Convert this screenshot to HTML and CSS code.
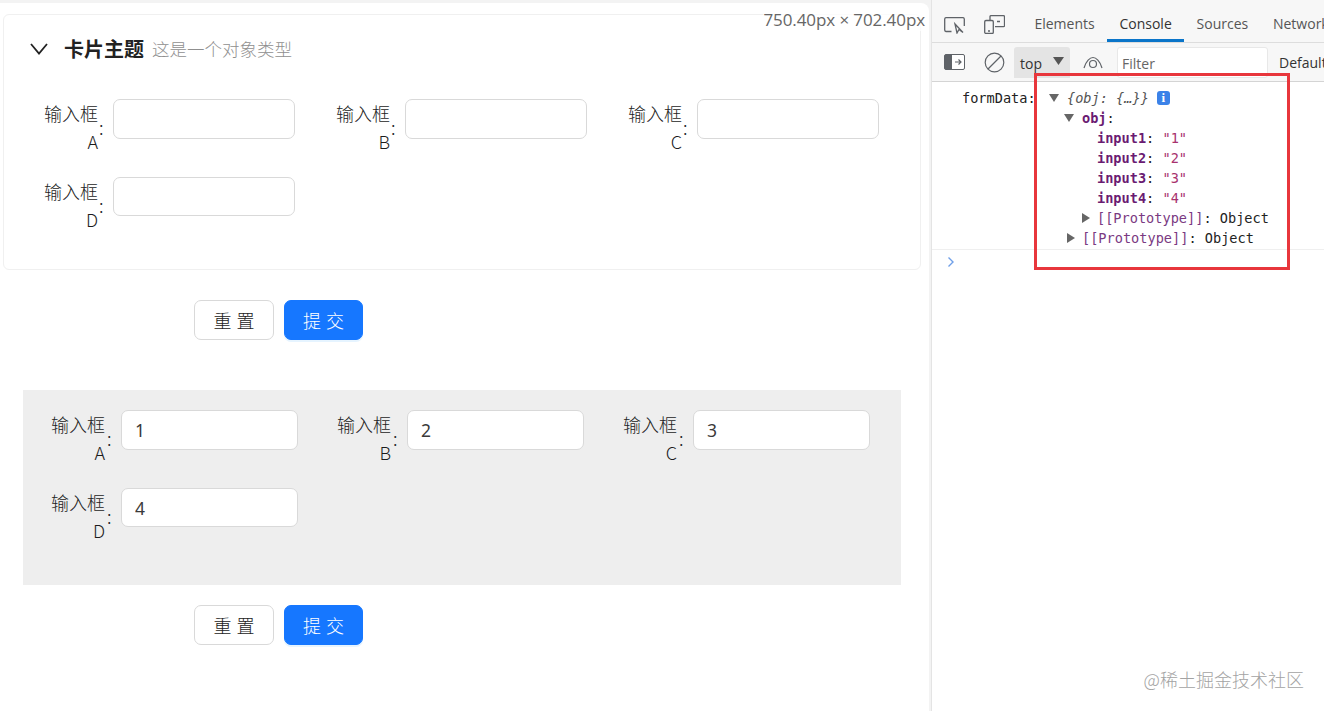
FILE: index.html
```html
<!DOCTYPE html>
<html lang="zh">
<head>
<meta charset="utf-8">
<title>表单</title>
<link rel="stylesheet" href="styles.css">
</head>
<body>
<main class="page">
  <section class="view">
    <div class="size-tip">750.40px × 702.40px</div>
    <div class="card">
      <header class="card-head">
        <svg class="chevron" width="18" height="12" viewBox="0 0 18 12"><path d="M1 1l8 9.500 8-9.500" fill="none" stroke="#222" stroke-width="1.800"/></svg>
        <strong class="card-title">卡片主题</strong>
        <span class="card-desc">这是一个对象类型</span>
      </header>
      <div class="fields">
        <div class="field"><label class="label"><span class="label-text">输入框A</span><span class="colon">:</span></label><input class="input" type="text"></div>
        <div class="field"><label class="label"><span class="label-text">输入框B</span><span class="colon">:</span></label><input class="input" type="text"></div>
        <div class="field"><label class="label"><span class="label-text">输入框C</span><span class="colon">:</span></label><input class="input" type="text"></div>
        <div class="field"><label class="label"><span class="label-text">输入框D</span><span class="colon">:</span></label><input class="input" type="text"></div>
      </div>
    </div>
    <div class="actions actions-first">
      <button class="btn">重 置</button>
      <button class="btn btn-primary">提 交</button>
    </div>
    <div class="gray-form">
      <div class="fields fields-gray">
        <div class="field"><label class="label"><span class="label-text">输入框A</span><span class="colon">:</span></label><input class="input" type="text" value="1"></div>
        <div class="field"><label class="label"><span class="label-text">输入框B</span><span class="colon">:</span></label><input class="input" type="text" value="2"></div>
        <div class="field"><label class="label"><span class="label-text">输入框C</span><span class="colon">:</span></label><input class="input" type="text" value="3"></div>
        <div class="field"><label class="label"><span class="label-text">输入框D</span><span class="colon">:</span></label><input class="input" type="text" value="4"></div>
      </div>
    </div>
    <div class="actions actions-second">
      <button class="btn">重 置</button>
      <button class="btn btn-primary">提 交</button>
    </div>
  </section>

  <section class="devtools">
    <nav class="tabs">
      <svg class="tool-icon first-icon" width="21" height="17" viewBox="0 0 21 17"><path d="M7.500 14.500H2A1.500 1.500 0 0 1 .7 13V2A1.500 1.500 0 0 1 2 .7h17A1.500 1.500 0 0 1 20.300 2v7" fill="none" stroke="#5f6368" stroke-width="1.300"/><path d="M11 7l2 9 2-3.500 4 3z" fill="none" stroke="#5f6368" stroke-width="1.300"/></svg>
      <svg class="tool-icon second-icon" width="21" height="19" viewBox="0 0 21 19"><path d="M6 5V1.500A1 1 0 0 1 7 .7h12.500a1 1 0 0 1 1 1v9a1 1 0 0 1-1 1H11" fill="none" stroke="#5f6368" stroke-width="1.300"/><rect x=".7" y="5.500" width="8.600" height="13" rx="1.300" fill="none" stroke="#5f6368" stroke-width="1.300"/><path d="M4 16h2M13 6.500h3" stroke="#5f6368" stroke-width="1.300"/></svg>
      <span class="tab tab-elements">Elements</span>
      <span class="tab tab-active">Console</span>
      <span class="tab">Sources</span>
      <span class="tab">Network</span>
    </nav>
    <div class="filterbar">
      <svg class="tool-icon sidebar-icon" width="21" height="16" viewBox="0 0 21 16"><rect x="0.500" y="0.500" width="20" height="15" rx="1.500" fill="#fff" stroke="#5f6368"/><path d="M2 0.500h6v15H2a1.500 1.500 0 0 1-1.500-1.500V2A1.500 1.500 0 0 1 2 .5z" fill="#5f6368"/><path d="M11 8h6M14.500 5.500L17 8l-2.500 2.500" fill="none" stroke="#5f6368" stroke-width="1.200"/></svg>
      <svg class="tool-icon clear-icon" width="21" height="21" viewBox="0 0 21 21"><circle cx="10.500" cy="10.500" r="9.300" fill="none" stroke="#5f6368" stroke-width="1.200"/><path d="M4 17L17 4" stroke="#5f6368" stroke-width="1.200"/></svg>
      <div class="context"><span>top</span><svg width="11" height="8" viewBox="0 0 11 8"><path d="M0 0h11L5.500 8z" fill="#555"/></svg></div>
      <svg class="tool-icon eye-icon" width="20" height="13" viewBox="0 0 20 13"><path d="M1 12C3 5 7 1.500 10 1.500S17 5 19 12" fill="none" stroke="#5f6368" stroke-width="1.200"/><circle cx="10" cy="8" r="3.500" fill="none" stroke="#5f6368" stroke-width="1.200"/></svg>
      <div class="filter">Filter</div>
      <span class="levels">Default</span>
    </div>
    <div class="console">
      <div class="log">
        <span class="log-prefix">formData:</span>
        <div class="tree">
          <div class="row"><i class="tri tri-down"></i><em class="summary">{obj: {…}}</em><span class="info">i</span></div>
          <div class="row indent-1"><i class="tri tri-down"></i><b class="key">obj</b>:</div>
          <div class="row indent-2"><b class="key">input1</b>:&nbsp;<span class="str">"1"</span></div>
          <div class="row indent-2"><b class="key">input2</b>:&nbsp;<span class="str">"2"</span></div>
          <div class="row indent-2"><b class="key">input3</b>:&nbsp;<span class="str">"3"</span></div>
          <div class="row indent-2"><b class="key">input4</b>:&nbsp;<span class="str">"4"</span></div>
          <div class="row indent-2"><i class="tri tri-right"></i><span class="proto">[[Prototype]]</span>:&nbsp;Object</div>
          <div class="row indent-1"><i class="tri tri-right"></i><span class="proto">[[Prototype]]</span>:&nbsp;Object</div>
        </div>
      </div>
      <div class="prompt"><svg width="8" height="12" viewBox="0 0 8 12"><path d="M1.500 1.500L6 6l-4.500 4.500" fill="none" stroke="#6f9fe8" stroke-width="1.400"/></svg></div>
    </div>
    <div class="red-box"></div>
    <div class="watermark">@稀土掘金技术社区</div>
  </section>
</main>
</body>
</html>
```

FILE: styles.css
```css
* { box-sizing: border-box; }
html, body { margin: 0; height: 100%; overflow: hidden; }
body {
  background: #f3f3f3;
  font-family: "Noto Sans CJK SC", "Noto Sans", sans-serif;
  color: #222;
}
.page { display: flex; height: 711px; padding-top: 3px; }

/* left viewport */
.view {
  position: relative;
  width: 929px;
  flex: none;
  background: #fff;
  border-top-right-radius: 8px;
  padding: 11px 8px 0 3px;
}
.size-tip {
  position: absolute;
  top: 6px;
  right: 4px;
  font: 17px/22px "Open Sans", sans-serif;
  color: #666;
  background: rgba(255, 255, 255, .75);
  letter-spacing: -.09px;
}
.card {
  height: 256px;
  border: 1px solid #f0f0f0;
  border-radius: 6px;
}
.card-head {
  display: flex;
  align-items: center;
  height: 36px;
  margin-top: 15px;
  padding-left: 26px;
}
.chevron { flex: none; margin: 1px 16px 0 0; }
.card-title { font-size: 20px; font-weight: 700; color: #222; }
.card-desc { font-size: 17.500px; font-weight: 300; color: #8f8f8f; margin-left: 8px; }

.fields {
  display: grid;
  grid-template-columns: repeat(3, 292px);
  grid-auto-rows: 40px;
  row-gap: 38px;
  margin: 33px 0 0 40px;
}
.field { display: flex; align-items: flex-start; }
.field:nth-child(4) .input { height: 39px; }
.label { display: flex; align-items: center; width: 69px; flex: none; height: 56px; }
.label-text {
  width: 54px;
  text-align: right;
  font-size: 18px;
  font-weight: 300;
  line-height: 28px;
  color: #1c1c1c;
}
.colon { font-size: 18px; line-height: 28px; margin-left: 1px; font-weight: 300; }
.input {
  width: 182px;
  height: 40px;
  padding: 0 14px;
  border: 1px solid #d9d9d9;
  border-radius: 7px;
  background: #fff;
  font: 400 17.500px "Noto Sans", sans-serif;
  color: #3a3a3a;
  outline: none;
}
.actions { display: flex; gap: 10px; padding-left: 191px; }
.actions-first { margin-top: 30px; }
.actions-second { margin-top: 20px; }
.btn {
  width: 80px;
  height: 40px;
  border: 1px solid #d9d9d9;
  border-radius: 7px;
  background: #fff;
  color: #222;
  font: 300 18px "Noto Sans CJK SC", sans-serif;
  word-spacing: 1px;
  padding: 0;
}
.btn-primary {
  width: 79px;
  background: #1677ff;
  border-color: #1677ff;
  color: #fff;
  box-shadow: 0 2px 0 rgba(5, 145, 255, .1);
}
.gray-form {
  height: 195px;
  margin: 50px 20px 0 20px;
  padding-top: 20px;
  background: #eeeeee;
}
.fields-gray {
  grid-template-columns: repeat(3, 286px);
  margin: 0 0 0 29px;
}
.fields-gray .input { width: 177px; padding: 0 13px; }
.fields-gray .label-text { margin-left: -1px; }
.fields-gray .colon { margin-left: 2px; }

/* devtools */
.devtools {
  position: relative;
  flex: 1;
  margin-left: 2px;
  margin-top: -3px;
  background: #fff;
  border-left: 1px solid #e4e4e4;
  overflow: hidden;
  font-family: "Open Sans", sans-serif;
  min-width: 0;
}
.tabs {
  display: flex;
  align-items: center;
  height: 43px;
  background: #f7f7f7;
  border-bottom: 1px solid #ddd;
  white-space: nowrap;
}
.tool-icon { flex: none; display: block; }
.first-icon { margin: 8px 0 0 12px; }
.second-icon { margin: 7px 0 0 19px; }
.tab {
  position: relative;
  display: flex;
  align-items: center;
  flex: none;
  height: 42px;
  padding: 4px 12.400px 0;
  font-size: 14px;
  color: #555;
}
.tab-elements { margin-left: 17px; }
.tab-active { color: #333; }
.tab-active::after {
  content: "";
  position: absolute;
  left: 0;
  right: 0;
  bottom: 0;
  height: 3px;
  background: #0a75c9;
}
.filterbar {
  display: flex;
  align-items: center;
  height: 39px;
  background: #f7f7f7;
  border-bottom: 1px solid #d4d4d4;
  white-space: nowrap;
}
.sidebar-icon { margin-left: 12px; }
.clear-icon { margin-left: 19px; }
.context {
  display: flex;
  flex: none;
  align-items: center;
  gap: 11px;
  width: 56px;
  height: 31px;
  margin-left: 9px;
  padding: 3px 0 0 6px;
  background: #e4e4e4;
  border-radius: 3px 3px 0 0;
  font-size: 14px;
  color: #333;
}
.context svg { margin-top: -6px; }
.eye-icon { margin-left: 13px; }
.filter {
  flex: none;
  width: 151px;
  height: 31px;
  margin-left: 14px;
  padding: 6px 0 0 4px;
  background: #fff;
  border: 1px solid #e8e8e8;
  border-radius: 3px;
  font-size: 14px;
  color: #666;
}
.levels { flex: none; margin-left: 11px; font-size: 14px; color: #333; }
.console { font: 13.600px/20px "DejaVu Sans Mono", monospace; color: #222; }
.log {
  display: flex;
  height: 168px;
  padding: 6px 0 0 30px;
  border-bottom: 1px solid #efefef;
}
.log-prefix { width: 87px; flex: none; }
.tree { white-space: nowrap; }
.row { position: relative; height: 20px; }
.indent-1 { padding-left: 15px; }
.indent-2 { padding-left: 48px; }
.tri { position: absolute; display: block; width: 0; height: 0; }
.tri-down {
  top: 6px;
  margin-left: 0;
  border-left: 5px solid transparent;
  border-right: 5px solid transparent;
  border-top: 8px solid #666;
}
.row > .tri-down { left: 0; }
.indent-1 > .tri-down { left: 15px; }
.row > .summary { margin-left: 18px; font-style: italic; color: #555; }
.indent-1 > .key { margin-left: 18px; }
.tri-right {
  top: 5px;
  border-top: 5px solid transparent;
  border-bottom: 5px solid transparent;
  border-left: 8px solid #666;
}
.indent-1 > .tri-right { left: 18px; }
.indent-2 > .tri-right { left: 33px; }
.indent-1 > .proto { margin-left: 18px; }
.key { color: #6a1b72; }
.str { color: #a8326e; }
.proto { color: #7a3a82; }
.info {
  display: inline-block;
  width: 13px;
  height: 14px;
  margin-left: 8px;
  border-radius: 3px;
  background: #3b82e8;
  color: #fff;
  font: 700 13px/14px "Liberation Serif", serif;
  text-align: center;
  vertical-align: 1px;
}
.prompt { height: 24px; padding: 6px 0 0 15px; }
.prompt svg { display: block; }
.red-box {
  position: absolute;
  left: 102px;
  top: 73px;
  width: 256px;
  height: 197px;
  border: 3px solid #e8363c;
  pointer-events: none;
}
.watermark {
  position: absolute;
  right: 20px;
  bottom: 20px;
  font-size: 18px;
  font-family: "Noto Sans CJK SC", sans-serif;
  font-weight: 300;
  line-height: 24px;
  color: #a3a3a3;
}
```
